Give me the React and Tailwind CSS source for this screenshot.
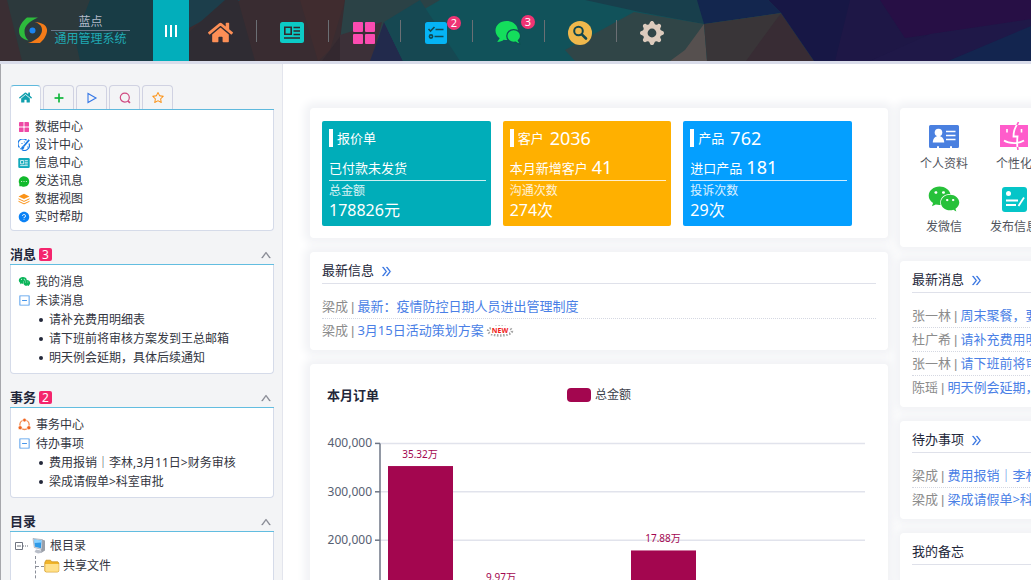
import { useState } from 'react'
import clsx from 'clsx'
import { FaHome, FaWeixin } from 'react-icons/fa'
import { BsGearFill } from 'react-icons/bs'
import {
  AiFillMessage,
  AiFillQuestionCircle,
  AiFillWechat,
  AiOutlineDoubleRight,
  AiOutlineMinusSquare,
  AiOutlinePlus,
  AiOutlineStar,
  AiOutlineUp
} from 'react-icons/ai'

/* ---------- Icons ---------- */

const GridIcon = ({ className }) => (
  <svg viewBox="0 0 22 22" className={className} fill="currentColor" aria-hidden="true">
    <rect x="0" y="0" width="10" height="10" rx="1" />
    <rect x="12" y="0" width="10" height="10" rx="1" />
    <rect x="0" y="12" width="10" height="10" rx="1" />
    <rect x="12" y="12" width="10" height="10" rx="1" />
  </svg>
)

const NewsIcon = ({ className, hole = '#33282c' }) => (
  <svg viewBox="0 0 24 21" className={className} aria-hidden="true">
    <rect width="24" height="21" rx="2.5" fill="currentColor" />
    <path
      d="M4.8 5.3h6.4v7H4.8zM13.5 5.5h6.5M13.5 9h6.5M13.5 12.5h6.5M4 16h16"
      fill="none"
      stroke={hole}
      strokeWidth="1.6"
    />
  </svg>
)

const ChecklistIcon = ({ className }) => (
  <svg viewBox="0 0 22 22" className={className} aria-hidden="true">
    <rect width="22" height="22" rx="2.5" fill="#05b4f5" />
    <g fill="none" stroke="#104a54" strokeWidth="1.6">
      <path d="M3.5 7l2 2 4-4M10.5 7.5h8M9.5 14.5h9" />
      <circle cx="6" cy="14.5" r="1.6" />
    </g>
  </svg>
)

const ChatIcon = ({ className }) => (
  <svg viewBox="0 0 26 24" className={className} aria-hidden="true">
    <path
      d="M11.5 0C5.2 0 .5 4.2.5 9.600c0 3.200 1.600 5.900 4.200 7.600L2.200 21c3 0 5-.9 6.500-2.200.9.200 1.800.3 2.800.3 6.300 0 11.300-4.200 11.300-9.500S17.800 0 11.500 0z"
      fill="#14de5c"
    />
    <path
      d="M18.700 8.600c3.900 0 6.900 2.800 6.900 6.300 0 1.900-.8 3.500-2.200 4.700l2 3.400c-2 0-3.500-.6-4.700-1.800-.7.100-1.300.200-2 .200-3.900 0-6.900-2.900-6.900-6.500s3-6.300 6.900-6.300z"
      fill="#14de5c"
      stroke="#104f55"
      strokeWidth="1.3"
    />
  </svg>
)

const SearchBadgeIcon = ({ className }) => (
  <svg viewBox="0 0 24 24" className={className} aria-hidden="true">
    <circle cx="12" cy="12" r="12" fill="#efb84c" />
    <circle cx="10.5" cy="10" r="4.3" fill="none" stroke="#12474f" strokeWidth="2" />
    <path d="M13.8 13.3l4.2 4.2" stroke="#12474f" strokeWidth="2.6" strokeLinecap="round" />
  </svg>
)

const PlayIcon = ({ className }) => (
  <svg viewBox="0 0 12 12" className={className} aria-hidden="true">
    <path d="M2 1.5v9l8-4.5z" fill="none" stroke="currentColor" strokeWidth="1.1" />
  </svg>
)

const LensIcon = ({ className }) => (
  <svg viewBox="0 0 12 12" className={className} fill="none" stroke="currentColor" aria-hidden="true">
    <circle cx="5.8" cy="5.6" r="4.5" strokeWidth="1.2" />
    <path d="M8.8 8.800l2.200 2" strokeWidth="1.6" />
  </svg>
)

const DesignIcon = ({ className }) => (
  <svg viewBox="0 0 12 12" className={className} fill="none" stroke="currentColor" aria-hidden="true">
    <path d="M8.5 1.200A5 5 0 0 0 1.500 8.500M4 10.800a5 5 0 0 0 7-6.300" strokeWidth="1.2" />
    <path d="M11.200.9L5.500 7.500" strokeWidth="1.7" />
    <path
      d="M5.500 7.300c-1.500-.3-1.900.9-2 1.600-.1.600-.8.800-1.300.8 1.200 1 4 .6 3.900-1.500"
      fill="currentColor"
      strokeWidth=".5"
    />
    <path d="M3.500 4.500h1M5.800 3h1M9 8h.8" strokeWidth="1" />
  </svg>
)

const LayersIcon = ({ className }) => (
  <svg viewBox="0 0 12 12" className={className} fill="none" stroke="currentColor" aria-hidden="true">
    <path d="M6 .7l5.500 2.700L6 6.100.5 3.400z" fill="currentColor" stroke="none" />
    <path d="M.5 5.800L6 8.400l5.500-2.600M.5 8.300L6 10.900l5.500-2.600" strokeWidth="1" />
  </svg>
)

const FlowIcon = ({ className }) => (
  <svg viewBox="0 0 12 12" className={className} aria-hidden="true">
    <circle cx="6" cy="6.300" r="4.300" fill="none" stroke="#f38b50" strokeWidth="1.200" />
    <g fill="#f0641e" stroke="#fff" strokeWidth=".6">
      <circle cx="6" cy="1.900" r="1.700" />
      <circle cx="2" cy="9" r="1.900" />
      <circle cx="10" cy="9" r="1.900" />
    </g>
  </svg>
)

const IdCardIcon = ({ className }) => (
  <svg viewBox="0 0 30 23" className={className} aria-hidden="true">
    <path
      d="M1.500 0h27a1.500 1.500 0 0 1 1.500 1.500v20a1.500 1.500 0 0 1-1.500 1.500h-5.500v-1.800h-2V23h-11v-1.800h-2V23H1.500A1.500 1.500 0 0 1 0 21.500v-20A1.500 1.500 0 0 1 1.500 0z"
      fill="#4a80e0"
    />
    <circle cx="9.5" cy="7.5" r="3.8" fill="#fff" />
    <path d="M3.800 17.500c0-4 2.500-6.500 5.700-6.500s5.700 2.500 5.700 6.500z" fill="#fff" />
    <path d="M17 6.500h9.500M17 10.500h9.500M17 14.500h9.500" stroke="#fff" strokeWidth="1.5" />
  </svg>
)

const FaceIcon = ({ className }) => (
  <svg viewBox="0 0 28 28" className={className} aria-hidden="true">
    <rect y="3" width="28" height="22" fill="#ff5ccb" />
    <path
      d="M17.500 2C14.500 6 13.500 10 13.500 14.500h4c-.5 4-.5 7.500 0 11.500M4 18.500c5 3.500 15 3.500 20 0"
      fill="none"
      stroke="#fff"
      strokeWidth="1.8"
    />
    <path d="M7 7v3.500M21.500 7v3.500" stroke="#fff" strokeWidth="1.6" />
    <path d="M18.500 0l-1.500 3.200M17.500 25l.5 3" stroke="#ff5ccb" strokeWidth="1.6" />
  </svg>
)

const PublishIcon = ({ className }) => (
  <svg viewBox="0 0 25 25" className={className} aria-hidden="true">
    <rect width="25" height="25" rx="3" fill="#05c5c8" />
    <circle cx="6.5" cy="6.5" r="2.5" fill="#fff" />
    <path d="M4 13.500h12M4 18h10" stroke="#fff" strokeWidth="1.8" />
    <path d="M22 10.500l-5.500 8.500" stroke="#fff" strokeWidth="1.8" />
  </svg>
)

const NewTag = () => (
  <svg viewBox="0 0 28 12" className="h-3 w-7" role="img" aria-label="NEW">
    <ellipse
      cx="14"
      cy="6"
      rx="12"
      ry="4.500"
      fill="#fff"
      stroke="#a5a5a5"
      strokeWidth="2.500"
      strokeDasharray="1.500 1.500"
    />
    <rect x="5" y="1" width="18" height="8" fill="#fff" />
    <text x="14" y="8" textAnchor="middle" fontSize="7" fontWeight="700" fill="#f01818">
      NEW
    </text>
  </svg>
)

const ComputerIcon = () => (
  <svg viewBox="0 0 14 16" className="h-4 w-3.5" aria-hidden="true">
    <path d="M9.500 1.500l3.500 1v10l-4 2.500z" fill="#9a9fa8" />
    <path d="M1 .5l9.500 1.200-.7 9.800L2.300 9.500z" fill="#d9dee6" stroke="#8d97a6" strokeWidth=".6" />
    <path d="M2 1.500l7.500 1-.6 7.800L3 8.700z" fill="#2f9be8" />
    <path d="M2 1.500l7.500 1-.2 2L2.300 5z" fill="#8bd2ff" />
    <path d="M4 11.500l5 1 1 2.200-4 .9-3.500-1.600z" fill="#b9bec8" />
  </svg>
)

const FolderIcon = () => (
  <svg viewBox="0 0 16 14" className="h-3.5 w-4" aria-hidden="true">
    <path
      d="M.8 3.500L2 1.200h4.500l1.300 1.600h6l1 1.200v8l-1 1H1.800l-1-1z"
      fill="#f0b429"
      stroke="#c98d14"
      strokeWidth=".7"
    />
    <path d="M1.300 5h13.400v7l-.9.8H2.200l-.9-.8z" fill="#ffe08a" />
  </svg>
)

const LogoMark = () => (
  <svg viewBox="0 0 28 27" className="h-[27px] w-7" aria-hidden="true">
    <path
      d="M8 .5h11C10.500 4 5.500 9 5.500 14c0 4 1 7 4 9.500C3.500 22.500 0 19 0 14 0 9 4 3.500 8 .5z"
      fill="#2dbb3c"
    />
    <path
      d="M9 26h12c4-3 7.500-9 7-13.500C27.500 8 23 5.500 15.500 5c5 1.500 7.500 4 7.500 8 0 5-5 10.500-14 13z"
      fill="#f47b18"
    />
    <circle cx="13.5" cy="13.5" r="3" fill="#1b84f0" />
  </svg>
)

const HeaderBackdrop = () => (
  <svg
    viewBox="0 0 1031 61"
    preserveAspectRatio="none"
    className="absolute inset-0 h-full w-full"
    aria-hidden="true"
  >
    <rect width="1031" height="61" fill="#11525a" />
    <rect x="860" width="171" height="61" fill="#1f1748" />
    <polygon points="0,0 160,0 80,61 0,61" fill="#2c393c" />
    <polygon points="0,0 7,0 22,61 0,61" fill="#3a2e33" />
    <polygon points="90,0 160,0 160,61 80,61 75,38" fill="#183c45" />
    <polygon points="189,0 240,0 189,30" fill="#1c3e4b" />
    <polygon points="189,28 240,0 400,0 345,61 189,61" fill="#392c31" />
    <polygon points="225,0 238,0 255,61 189,61 189,32" fill="#2f2c33" />
    <polygon points="300,0 345,0 330,50 318,61" fill="#402c2f" />
    <polygon points="322,61 345,30 345,61" fill="#33282f" />
    <polygon points="345,0 440,0 380,35 340,40" fill="#2b4246" />
    <polygon points="340,35 382,22 372,61 340,61" fill="#3c3038" />
    <polygon points="384,22 403,61 370,61" fill="#222a4c" />
    <polygon points="384,22 420,0 460,61 403,61" fill="#164852" />
    <polygon points="585,0 700,0 704,24 640,12" fill="#183f4c" />
    <polygon points="565,50 634,12 704,24 690,61 575,61" fill="#304547" />
    <polygon points="685,50 704,24 707,61 670,61" fill="#56504f" />
    <polygon points="697,0 768,0 781,13 704,24" fill="#13264e" />
    <polygon points="704,24 781,13 750,61 707,61" fill="#393538" />
    <polygon points="781,13 814,61 746,61" fill="#382c34" />
    <polygon points="768,0 880,0 900,36 870,61 814,61 781,13" fill="#171745" />
    <polygon points="850,0 880,0 930,36 870,61 835,61" fill="#1e1746" />
    <polygon points="880,0 1031,0 1031,20 905,38" fill="#270f45" />
    <polygon points="930,34 1031,19 1031,27 948,61 870,61" fill="#1f1848" />
    <polygon points="1031,26 1031,61 948,61" fill="#13254f" />
  </svg>
)

/* ---------- Data ---------- */

const NAV_ITEMS = [
  { label: '首页', icon: <FaHome className="h-[25px] w-[25px] text-[#fd8f56]" /> },
  { label: '资讯', icon: <NewsIcon className="h-[21px] w-6 text-[#0ccbc6]" /> },
  { label: '应用', icon: <GridIcon className="h-[22px] w-[22px] text-[#fb4bb0]" /> },
  { label: '待办', icon: <ChecklistIcon className="h-[22px] w-[22px]" />, badge: 2 },
  { label: '消息', icon: <ChatIcon className="h-6 w-[26px]" />, badge: 3 },
  { label: '搜索', icon: <SearchBadgeIcon className="h-6 w-6" /> },
  { label: '设置', icon: <BsGearFill className="h-6 w-6 text-[#dccbbd]" /> }
]

const TABS = [
  { label: '主页', icon: <FaHome className="h-[13px] w-[13px] text-[#11a0ae]" /> },
  { label: '新增', icon: <AiOutlinePlus className="h-3 w-3 stroke-[60px] text-[#0fb63a]" /> },
  { label: '运行', icon: <PlayIcon className="h-3 w-3 text-[#3477e6]" /> },
  { label: '查找', icon: <LensIcon className="h-3 w-3 text-[#d04a82]" /> },
  { label: '收藏', icon: <AiOutlineStar className="h-[14px] w-[14px] text-[#fb9318]" /> }
]

const CENTER_LINKS = [
  { label: '数据中心', icon: <GridIcon className="h-2.5 w-2.5 text-[#ee4aa5]" /> },
  { label: '设计中心', icon: <DesignIcon className="h-3 w-3 text-[#1679e6]" /> },
  { label: '信息中心', icon: <NewsIcon className="h-2.5 w-3 text-[#12a9bb]" hole="#fff" /> },
  { label: '发送讯息', icon: <AiFillMessage className="h-[13px] w-[13px] text-[#12b92c]" /> },
  { label: '数据视图', icon: <LayersIcon className="h-3 w-3 text-[#fb9318]" /> },
  { label: '实时帮助', icon: <AiFillQuestionCircle className="h-3 w-3 text-[#0b82f5]" /> }
]

const STATS = [
  {
    title: '报价单',
    sub: '已付款未发货',
    label: '总金额',
    value: '178826元',
    color: 'bg-[#00adb9]'
  },
  {
    title: '客户',
    count: '2036',
    sub: '本月新增客户',
    subCount: '41',
    label: '沟通次数',
    value: '274次',
    color: 'bg-[#ffb000]'
  },
  {
    title: '产品',
    count: '762',
    sub: '进口产品',
    subCount: '181',
    label: '投诉次数',
    value: '29次',
    color: 'bg-[#049fff]'
  }
]

const NEWS = [
  { from: '梁成', text: '最新：疫情防控日期人员进出管理制度' },
  { from: '梁成', text: '3月15日活动策划方案', isNew: true }
]

const MESSAGES = [
  { from: '张一林', text: '周末聚餐，要' },
  { from: '杜广希', text: '请补充费用明细表' },
  { from: '张一林', text: '请下班前将审核方案发到王总邮箱' },
  { from: '陈瑶', text: '明天例会延期，具体后续通知' }
]

const TODOS = [
  { from: '梁成', text: '费用报销｜李林,3月11日>财务审核' },
  { from: '梁成', text: '梁成请假单>科室审批' }
]

const SHORTCUTS = [
  { label: '个人资料', icon: <IdCardIcon className="h-[23px] w-[30px]" /> },
  { label: '发微信', icon: <FaWeixin className="h-8 w-8 text-[#27c13a]" /> },
  { label: '个性化', icon: <FaceIcon className="h-7 w-7" /> },
  { label: '发布信息', icon: <PublishIcon className="h-[25px] w-[25px]" /> }
]

const ORDERS = [
  { slot: 0, value: 353200, label: '35.32万' },
  { slot: 1, value: 99700, label: '9.97万' },
  { slot: 3, value: 178800, label: '17.88万' }
]

/* ---------- Header ---------- */

const Header = () => (
  <header className="relative h-[64px] shrink-0 border-b-[3px] border-[#d9dcea] bg-[#11525a]">
    <HeaderBackdrop />
    <div className="relative flex h-full items-stretch">
      <a href="#home" className="flex w-[153px] shrink-0 items-center gap-1 pl-[19px]">
        <LogoMark />
        <span className="flex flex-col items-center text-xs leading-4 text-[#b3b9c8]">
          <span className="w-[79px] border-b border-[#69788c] text-center">蓝点</span>
          <span className="text-[#1faab4]">通用管理系统</span>
        </span>
      </a>
      <button
        type="button"
        aria-label="折叠菜单"
        className="flex w-9 shrink-0 items-center justify-center gap-[3px] bg-[#02aebb]"
      >
        <span className="h-3 w-[2px] bg-white" />
        <span className="h-3 w-[2px] bg-white" />
        <span className="h-3 w-[2px] bg-white" />
      </button>
      <nav className="flex">
        {NAV_ITEMS.map((item, index) => (
          <button
            key={item.label}
            type="button"
            aria-label={item.label}
            className={clsx(
              'relative flex items-center justify-center pt-1',
              index === 0 ? 'w-[67px] pr-1' : 'w-[72px]'
            )}
          >
            {index > 0 && <span className="absolute left-0 top-5 h-[22px] w-px bg-[#6b6f74]" />}
            <span className="relative">
              {item.icon}
              {item.badge && (
                <span className="absolute -right-3.5 -top-1.5 flex h-3.5 w-3.5 items-center justify-center rounded-full bg-[#ef3474] text-[11px] leading-none text-white">
                  {item.badge}
                </span>
              )}
            </span>
          </button>
        ))}
      </nav>
    </div>
  </header>
)

/* ---------- Sidebar ---------- */

const SidebarSection = ({ title, count, children }) => {
  const [open, setOpen] = useState(true)

  return (
    <section className="mt-3.5">
      <h2 className="flex h-5 items-center border-b border-[#62bde0] text-[13px] font-bold text-[#22263a]">
        {title}
        {count && (
          <span className="ml-[3px] flex h-[13px] w-[13px] items-center justify-center rounded-xs bg-[#f4256d] text-xs font-normal leading-none text-white">
            {count}
          </span>
        )}
        <button
          type="button"
          aria-label={`折叠${title}`}
          onClick={() => setOpen(!open)}
          className="ml-auto mr-[2px]"
        >
          <AiOutlineUp className={clsx('h-3 w-3 stroke-[30px] text-[#82858e]', !open && 'rotate-180')} />
        </button>
      </h2>
      {open && (
        <div className="rounded-b border border-t-0 border-[#d5dbe9] bg-white">{children}</div>
      )}
    </section>
  )
}

const SidebarList = ({ top, group, items }) => (
  <div className="px-[7px] pb-1.5 pt-[7px] text-xs leading-[19px]">
    <a href="#all" className="flex items-center gap-[5px]">
      {top.icon}
      {top.label}
    </a>
    <div className="flex items-center gap-[5px]">
      <AiOutlineMinusSquare className="h-[13px] w-[13px] text-[#4796ea]" />
      {group}
    </div>
    <ul>
      {items.map((item) => (
        <li key={item} className="flex items-center gap-1.5 whitespace-nowrap pl-[21px]">
          <span className="h-1 w-1 rounded-full bg-[#23283a]" />
          <a href="#item">{item}</a>
        </li>
      ))}
    </ul>
  </div>
)

const Sidebar = () => {
  const [tab, setTab] = useState(0)

  return (
    <aside className="w-[283px] shrink-0 overflow-hidden border-l border-r border-l-[#a6a7ac] border-r-[#e3e5ed] bg-[#f3f4f6] pl-[9px] pr-2 pt-[21px] text-[#33363f]">
      <div role="tablist" className="flex gap-[2px]">
        {TABS.map((item, index) => (
          <button
            key={item.label}
            type="button"
            role="tab"
            aria-label={item.label}
            aria-selected={tab === index}
            onClick={() => setTab(index)}
            className={clsx(
              'flex h-6 w-[31px] items-center justify-center rounded-t border border-b-0',
              tab === index
                ? 'border-[#d5d8e6] border-t-[#5fb9dd] bg-white'
                : 'border-[#d0d2e2] bg-[#f3f4f6]'
            )}
          >
            {item.icon}
          </button>
        ))}
      </div>
      <div className="flex">
        <span className="w-[30px] border-l border-[#d5dbe9] bg-white" />
        <span className="h-px flex-1 bg-[#5fb9dd]" />
      </div>
      <ul className="rounded-b border border-t-0 border-[#d5dbe9] bg-white px-[7px] pb-1 pt-2 text-xs leading-[18px]">
        {CENTER_LINKS.map((link) => (
          <li key={link.label}>
            <a href="#center" className="flex items-center gap-[5px]">
              <span className="flex w-3 justify-center">{link.icon}</span>
              {link.label}
            </a>
          </li>
        ))}
      </ul>

      <SidebarSection title="消息" count={3}>
        <SidebarList
          top={{ label: '我的消息', icon: <AiFillWechat className="h-[13px] w-[13px] text-[#0bb55a]" /> }}
          group="未读消息"
          items={['请补充费用明细表', '请下班前将审核方案发到王总邮箱', '明天例会延期，具体后续通知']}
        />
      </SidebarSection>

      <SidebarSection title="事务" count={2}>
        <SidebarList
          top={{ label: '事务中心', icon: <FlowIcon className="h-[13px] w-[13px]" /> }}
          group="待办事项"
          items={['费用报销｜李林,3月11日>财务审核', '梁成请假单>科室审批']}
        />
      </SidebarSection>

      <SidebarSection title="目录">
        <ul className="px-[3px] pb-5 pt-1 text-xs leading-5">
          <li>
            <div className="flex items-center gap-1">
              <span className="flex items-center">
                <svg viewBox="0 0 14 10" className="h-2.5 w-3.5" fill="none" stroke="#6f7480" aria-hidden="true">
                  <path d="M1.500 1.500h7v7h-7zM3 5h4" />
                  <path d="M9 5h5" strokeDasharray="1 1" />
                </svg>
              </span>
              <ComputerIcon />
              根目录
            </div>
            <ul className="ml-[21px] border-l border-dashed border-[#8b8f99] pb-3">
              <li className="flex items-center gap-[3px]">
                <span className="flex items-center">
                  <span className="w-2 border-t border-dashed border-[#8b8f99]" />
                  <FolderIcon />
                </span>
                共享文件
              </li>
            </ul>
          </li>
        </ul>
      </SidebarSection>
    </aside>
  )
}

/* ---------- Content ---------- */

const Card = ({ className, children }) => (
  <section className={clsx('rounded bg-white shadow-[0_0_8px_6px_#f2f3f6]', className)}>
    {children}
  </section>
)

const StatCard = ({ stat }) => (
  <div className={clsx('h-[105px] whitespace-nowrap rounded-xs pl-[7px] pr-[5px] pt-2 text-white', stat.color)}>
    <div className="flex h-[18px] items-center text-[13px]">
      <span className="mr-1 h-[18px] w-1 bg-white" />
      <span className="pt-0.5">{stat.title}</span>
      {stat.count && <span className="ml-1.5 text-lg leading-none">{stat.count}</span>}
    </div>
    <div className="mt-2.5 flex h-6 items-center border-b border-white/80 text-[13px]">
      <span>{stat.sub}</span>
      {stat.subCount && <span className="ml-1 pb-1 text-lg leading-none">{stat.subCount}</span>}
    </div>
    <div className="mt-px text-xs leading-[18px] text-white/85">{stat.label}</div>
    <div className="text-base leading-5">{stat.value}</div>
  </div>
)

const ListCard = ({ title, items = [], more = true }) => (
  <Card className="px-3 pb-[7px] pt-[7px]">
    <h2 className="flex h-[25px] items-center gap-1.5 border-b border-[#dfe1ea] text-[13px] text-[#23273a]">
      {title}
      {more && (
        <a href="#more" aria-label={`更多${title}`}>
          <AiOutlineDoubleRight className="h-[13px] w-[13px] stroke-[20px] text-[#2f6fe0]" />
        </a>
      )}
    </h2>
    <ul className="mt-[11px] text-[13px]">
      {items.map((item) => (
        <li
          key={item.text}
          className="flex h-6 items-center overflow-hidden whitespace-nowrap border-b border-dotted border-[#d5d8e2] text-[#8c8c8c] last:border-b-0"
        >
          <span>{item.from}</span>
          <span className="mx-[3px] font-['Liberation_Sans',sans-serif]">|</span>
          <a href="#detail" className="text-[#4a7fe6]">
            {item.text}
          </a>
          {item.isNew && (
            <span className="ml-0.5">
              <NewTag />
            </span>
          )}
        </li>
      ))}
    </ul>
  </Card>
)

const OrderChart = () => {
  const baseline = 208
  const scale = (value) => baseline - (value * 48.4) / 100000

  return (
    <svg viewBox="0 0 578 240" className="w-full" role="img" aria-label="本月订单">
      {[400000, 300000, 200000, 100000, 0].map((tick) => (
        <g key={tick}>
          <line x1="70" x2="555" y1={scale(tick)} y2={scale(tick)} stroke="#e1e3ec" strokeWidth="1.5" />
          <line x1="65" x2="70" y1={scale(tick)} y2={scale(tick)} stroke="#6e7686" strokeWidth="1.5" />
          <text x="62" y={scale(tick) + 4} textAnchor="end" fontSize="12" fill="#566072">
            {tick.toLocaleString('en-US')}
          </text>
        </g>
      ))}
      <line x1="70" x2="70" y1={scale(400000)} y2={baseline} stroke="#6e7686" strokeWidth="1.5" />
      {ORDERS.map((order) => {
        const center = 110 + order.slot * 81
        return (
          <g key={order.slot} fill="#a3064f">
            <rect x={center - 32} y={scale(order.value)} width="65" height={baseline - scale(order.value)} />
            <text x={center} y={scale(order.value) - 8} textAnchor="middle" fontSize="10">
              {order.label}
            </text>
          </g>
        )
      })}
    </svg>
  )
}

export default function App() {
  return (
    <div
      lang="zh-CN"
      className="flex h-screen flex-col overflow-hidden bg-white font-['Noto_Sans','Noto_Sans_CJK_SC',sans-serif]"
    >
      <Header />
      <div className="flex min-h-0 flex-1">
        <Sidebar />
        <main className="flex min-w-0 flex-1 gap-3 overflow-hidden pl-[27px] pt-11">
          <div className="flex min-w-[578px] flex-1 flex-col gap-3.5">
            <Card className="grid grid-cols-3 gap-3 pb-3 pl-3 pr-9 pt-[13px]">
              {STATS.map((stat) => (
                <StatCard key={stat.title} stat={stat} />
              ))}
            </Card>

            <ListCard title="最新信息" items={NEWS} />

            <Card className="pt-[19px]">
              <div className="grid grid-cols-3 items-center px-[17px]">
                <h2 className="text-[13px] font-bold leading-6 text-[#23273a]">本月订单</h2>
                <div className="flex items-center justify-center gap-1 text-xs text-[#3d414c]">
                  <span className="h-3.5 w-6 rounded-sm bg-[#a3064f]" />
                  总金额
                </div>
              </div>
              <div className="mt-[22px]">
                <OrderChart />
              </div>
            </Card>
          </div>

          <div className="flex w-[298px] shrink-0 flex-col gap-3.5">
            <Card className="grid grid-flow-col grid-cols-4 grid-rows-2 gap-y-2 px-[9px] pb-[9px] pt-3">
              {SHORTCUTS.map((item) => (
                <a
                  key={item.label}
                  href="#shortcut"
                  className="flex flex-col items-center text-xs text-[#50535c]"
                >
                  <span className="flex h-8 items-center">{item.icon}</span>
                  <span className="flex h-[23px] items-center whitespace-nowrap">{item.label}</span>
                </a>
              ))}
            </Card>

            <ListCard title="最新消息" items={MESSAGES} />
            <ListCard title="待办事项" items={TODOS} />
            <ListCard title="我的备忘" more={false} />
          </div>
        </main>
      </div>
    </div>
  )
}
